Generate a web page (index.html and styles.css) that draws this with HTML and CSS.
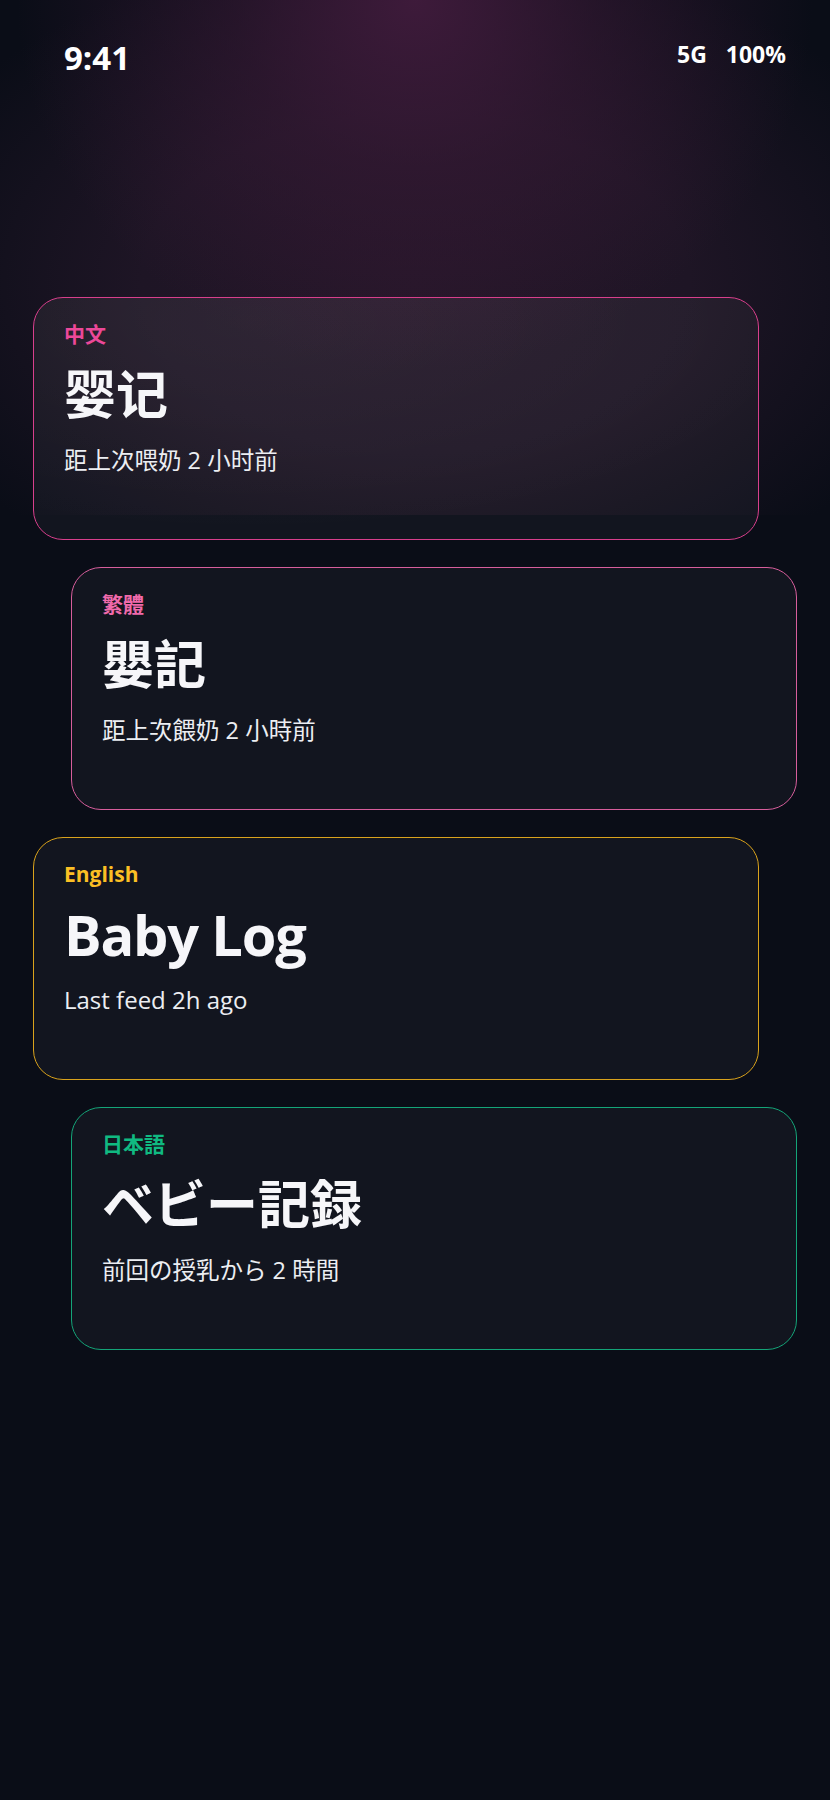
FILE: index.html
```html
<!DOCTYPE html>
<html lang="zh">
<head>
<meta charset="utf-8">
<title>Baby Log</title>
<link rel="stylesheet" href="styles.css">
</head>
<body>
  <div class="screen">
    <header class="statusbar">
      <span class="time">9:41</span>
      <div class="indicators">
        <span>5G</span>
        <span>100%</span>
      </div>
    </header>

    <main class="cards">
      <section class="card card-sc" lang="zh-Hans">
        <div class="label">中文</div>
        <h1 class="title">婴记</h1>
        <p class="sub">距上次喂奶 2 小时前</p>
      </section>
      <section class="card card-tc" lang="zh-Hant">
        <div class="label">繁體</div>
        <h1 class="title">嬰記</h1>
        <p class="sub">距上次餵奶 2 小時前</p>
      </section>
      <section class="card card-en" lang="en">
        <div class="label">English</div>
        <h1 class="title">Baby Log</h1>
        <p class="sub">Last feed 2h ago</p>
      </section>
      <section class="card card-ja" lang="ja">
        <div class="label">日本語</div>
        <h1 class="title">ベビー記録</h1>
        <p class="sub">前回の授乳から 2 時間</p>
      </section>
    </main>
  </div>
</body>
</html>
```

FILE: styles.css
```css
* { box-sizing: border-box; }

html, body {
  margin: 0;
  padding: 0;
}

body {
  width: 830px;
  min-height: 1800px;
  font-family: "Open Sans", "Noto Sans CJK SC", sans-serif;
  color: #f4f5f8;
  background:
    radial-gradient(ellipse 48% 72% at 50% 0%, rgba(64, 27, 60, 0.95) 0%, rgba(60, 26, 56, 0.5) 45%, rgba(60, 26, 56, 0) 100%) top left / 830px 515px no-repeat,
    radial-gradient(ellipse 66% 66% at 50% 55%, #241628 0%, #1e1525 50%, rgba(10, 13, 23, 0) 100%) top left / 830px 515px no-repeat,
    #0a0d17;
}

.screen {
  width: 830px;
}

.statusbar {
  display: flex;
  justify-content: space-between;
  align-items: flex-start;
  padding: 38px 44px 0 64px;
  height: 78px;
  color: #ffffff;
}

.time {
  font-size: 33px;
  font-weight: 700;
  line-height: 40px;
}

.indicators {
  display: flex;
  gap: 19px;
  font-size: 23px;
  font-weight: 700;
  line-height: 32px;
}

.cards {
  display: flex;
  flex-direction: column;
  gap: 27px;
  padding: 219px 0 0 33px;
}

.card {
  width: 726px;
  height: 243px;
  padding: 23px 30px;
  border: 1.5px solid;
  border-radius: 30px;
  background: rgba(255, 255, 255, 0.035);
}

.card:nth-child(even) {
  margin-left: 38px;
}

.card-sc {
  background:
    radial-gradient(ellipse 80% 90% at 30% 10%, rgba(255, 255, 255, 0.03), rgba(255, 255, 255, 0) 100%),
    rgba(255, 255, 255, 0.035);
}

.label {
  font-size: 21px;
  font-weight: 700;
  line-height: 26px;
}

.title {
  margin: 14px 0 0;
  font-size: 56px;
  font-weight: 700;
  line-height: 66px;
  letter-spacing: -1.2px;
  color: #f6f6f9;
}

.card-sc .title,
.card-tc .title,
.card-ja .title {
  font-size: 52px;
  letter-spacing: 0;
}

.sub {
  margin: 16px 0 0;
  font-size: 24px;
  font-weight: 400;
  line-height: 34px;
  color: #eceef2;
}

.card-sc .sub,
.card-tc .sub,
.card-ja .sub {
  font-size: 23.5px;
}

.card-sc { border-color: #d83f8c; }
.card-sc .label { color: #ec4899; }

.card-tc { border-color: #d75e9c; font-family: "Open Sans", "Noto Sans CJK TC", sans-serif; }
.card-tc .label { color: #f06aab; }

.card-en { border-color: #d9a21c; }
.card-en .label { color: #fbbf24; }

.card-ja { border-color: #14a478; font-family: "Open Sans", "Noto Sans CJK JP", sans-serif; }
.card-ja .label { color: #10b981; }
```
